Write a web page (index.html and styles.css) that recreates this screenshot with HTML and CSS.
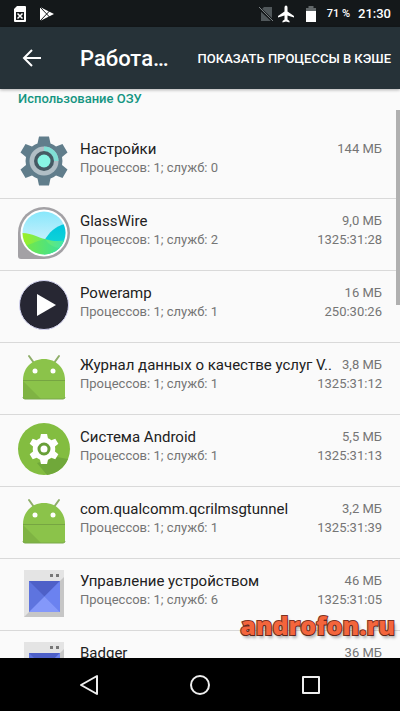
FILE: index.html
```html
<!DOCTYPE html>
<html lang="ru">
<head>
<meta charset="utf-8">
<meta name="viewport" content="width=device-width, initial-scale=1">
<title>Работающие приложения</title>
<link rel="stylesheet" href="styles.css">
</head>
<body>
<svg class="defs" aria-hidden="true">
  <defs>
    <path id="gear" d="M-5-24.500H5L6.500-17.500A18 18 0 0 1 12-14.500L18.500-17L23.500-8.500L18-4A18 18 0 0 1 18 4L23.500 8.500L18.500 17L12 14.500A18 18 0 0 1 6.500 17.500L5 24.500H-5L-6.500 17.500A18 18 0 0 1-12 14.500L-18.500 17L-23.500 8.500L-18 4A18 18 0 0 1-18-4L-23.500-8.500L-18.500-17L-12-14.500A18 18 0 0 1-6.500-17.500Z"/>
    <symbol id="robot" viewBox="0 0 52 52">
      <path d="M11 5L16 12M41 5L36 12" stroke="#8fae6a" stroke-width="2" stroke-linecap="round"/>
      <path d="M5 29C5 17 14 8 26 8S47 17 47 29Z" fill="#8bc34a"/>
      <path d="M5 30H47V46Q47 48 45 48H7Q5 48 5 46Z" fill="#8bc34a"/>
      <path d="M5 30L23 48H7Q5 48 5 46Z" fill="#7fb343"/>
      <path d="M5 29.500H47" stroke="#76a542"/>
      <path d="M5 46Q5 48 7 48H45Q47 48 47 46" fill="none" stroke="#78a848"/>
      <circle cx="17" cy="20" r="2.500" fill="#fff"/><circle cx="35" cy="20" r="2.500" fill="#fff"/>
    </symbol>
    <symbol id="window" viewBox="0 0 52 52">
      <path d="M6 3H46V50H6Z" fill="#e4e4e4"/>
      <path d="M6 50L11 45H42V14L46 10V50Z" fill="#c6c6c6"/>
      <path d="M32 7H35V10H32ZM38 7H41V10H38Z" fill="#777"/>
      <path d="M11 14H42V45H11Z" fill="#5e74df"/>
      <path d="M11 14H42L26.500 29.500Z" fill="#4e60c8"/>
      <path d="M42 14V45L26.500 29.500Z" fill="#6b82f0"/>
      <path d="M11 45H42L26.500 29.500Z" fill="#8498fa"/>
    </symbol>
  </defs>
</svg>

<div class="status">
  <svg class="status-icon" viewBox="0 0 16 18" aria-hidden="true"><path d="M5 1H13Q14 1 14 2V16Q14 17 13 17H3Q2 17 2 16V4Z" fill="#fff"/><path d="M4 7H12V15H4Z" fill="#14181a"/><path d="M5.500 8.500L10.500 13.500M10.500 8.500L5.500 13.500" stroke="#fff" stroke-width="1.500"/></svg>
  <svg class="status-icon play" viewBox="0 0 16 18" aria-hidden="true"><path d="M1 2L15 9L1 16Z" fill="#fff"/><path d="M1 2L10.500 12M1 16L10.500 6" stroke="#14181a" stroke-width="1"/></svg>
  <span class="spacer"></span>
  <svg class="status-icon" viewBox="0 0 16 18" aria-hidden="true"><path d="M6 2H14V16H3V5Z" fill="#50575a"/><path d="M1 3L15 16" stroke="#14181a" stroke-width="3"/><path d="M1 2L15 16" stroke="#7a8082" stroke-width="1"/></svg>
  <svg class="status-icon wide" viewBox="0 0 18 18" aria-hidden="true"><path d="M9 0.500Q10.500 0.500 10.500 2.500V6.500L17 11V12.500L10.500 10.500V14.500L12.500 16V17.500L9 16.500L5.500 17.500V16L7.500 14.500V10.500L1 12.500V11L7.500 6.500V2.500Q7.500 0.500 9 0.500Z" fill="#fff"/></svg>
  <svg class="status-icon battery" viewBox="0 0 16 18" aria-hidden="true"><path d="M5.500 1H10.500V3H13V7H3V3H5.500Z" fill="#62686a"/><path d="M3 6H13V17H3Z" fill="#fff"/></svg>
  <span class="percent">71 %</span>
  <span class="clock">21:30</span>
</div>

<header class="bar">
  <button class="back" aria-label="Назад"><svg viewBox="0 0 24 24"><path d="M21 12H4M12 4L4 12L12 20" fill="none" stroke="#fff" stroke-width="2"/></svg></button>
  <h1>Работа…</h1>
  <button class="action">ПОКАЗАТЬ ПРОЦЕССЫ В КЭШЕ</button>
</header>

<main>
  <h2>Использование ОЗУ</h2>
  <ul>
    <li><a href="#">
      <svg class="icon" viewBox="0 0 52 52" aria-hidden="true"><g transform="translate(26 26)"><use href="#gear" fill="#607d8b"/><circle r="14.500" fill="#b0bec5"/><path d="M0-14.500A14.500 14.500 0 0 1 14.500 0H0Z" fill="#80dfd5"/><circle r="10" fill="#455a64"/><circle r="6.500" fill="#88f5e5"/></g></svg>
      <span class="text"><span class="name">Настройки</span><span class="sub">Процессов: 1; служб: 0</span></span>
      <span class="usage"><span>144 МБ</span></span>
    </a></li>
    <li><a href="#">
      <svg class="icon" viewBox="0 0 52 52" aria-hidden="true"><defs><linearGradient id="sky" x2="0" y2="1"><stop stop-color="#7ee6fb"/><stop offset=".6" stop-color="#c2effc"/></linearGradient><linearGradient id="hill"><stop stop-color="#a6f016"/><stop offset="1" stop-color="#3be4b4"/></linearGradient><linearGradient id="wave" x2="0" y2="1"><stop stop-color="#00c4df"/><stop offset="1" stop-color="#1be0cf"/></linearGradient><clipPath id="disc"><circle cx="26" cy="26" r="21.500"/></clipPath></defs><path d="M0 26A26 26 0 1 1 26 52H3Q0 52 0 49Z" fill="#a3a1a5"/><circle cx="26" cy="26" r="23.500" fill="#fff"/><g clip-path="url(#disc)"><path d="M0 0H52V52H0Z" fill="url(#sky)"/><path d="M26 34C32 24 38 18 52 16V52H26Z" fill="url(#wave)"/><path d="M0 26C14 25 20 31 27 32C33 34 40 35 50 33V52H0Z" fill="url(#hill)"/><path d="M0 42C12 37 20 34 27 32C32 39 36 41 48 42V52H0Z" fill="#22d88b" opacity=".3"/></g></svg>
      <span class="text"><span class="name">GlassWire</span><span class="sub">Процессов: 1; служб: 2</span></span>
      <span class="usage"><span>9,0 МБ</span><span>1325:31:28</span></span>
    </a></li>
    <li><a href="#">
      <svg class="icon" viewBox="0 0 52 52" aria-hidden="true"><circle cx="26" cy="26" r="24.500" fill="#272733" stroke="#d5d5f2"/><path d="M19 15L38 26L19 37Z" fill="#fff"/></svg>
      <span class="text"><span class="name">Poweramp</span><span class="sub">Процессов: 1; служб: 1</span></span>
      <span class="usage"><span>16 МБ</span><span>250:30:26</span></span>
    </a></li>
    <li><a href="#">
      <svg class="icon" aria-hidden="true"><use href="#robot"/></svg>
      <span class="text"><span class="name">Журнал данных о качестве услуг V..</span><span class="sub">Процессов: 1; служб: 1</span></span>
      <span class="usage"><span>3,8 МБ</span><span>1325:31:12</span></span>
    </a></li>
    <li><a href="#">
      <svg class="icon" viewBox="0 0 52 52" aria-hidden="true"><circle cx="26" cy="26" r="26" fill="#83bd40"/><path d="M39 34L50 36A26 26 0 0 1 29 52L19 40Z" fill="#70a83a"/><g transform="translate(26 26)"><use href="#gear" transform="scale(.61)" fill="#fff"/><circle r="5" fill="#fff" stroke="#689f38" stroke-width="3"/></g></svg>
      <span class="text"><span class="name">Система Android</span><span class="sub">Процессов: 1; служб: 1</span></span>
      <span class="usage"><span>5,5 МБ</span><span>1325:31:13</span></span>
    </a></li>
    <li><a href="#">
      <svg class="icon" aria-hidden="true"><use href="#robot"/></svg>
      <span class="text"><span class="name">com.qualcomm.qcrilmsgtunnel</span><span class="sub">Процессов: 1; служб: 1</span></span>
      <span class="usage"><span>3,2 МБ</span><span>1325:31:39</span></span>
    </a></li>
    <li><a href="#">
      <svg class="icon" aria-hidden="true"><use href="#window"/></svg>
      <span class="text"><span class="name">Управление устройством</span><span class="sub">Процессов: 1; служб: 6</span></span>
      <span class="usage"><span>46 МБ</span><span>1325:31:05</span></span>
    </a></li>
    <li><a href="#">
      <svg class="icon" aria-hidden="true"><use href="#window"/></svg>
      <span class="text"><span class="name">Badger</span></span>
      <span class="usage"><span>36 МБ</span></span>
    </a></li>
  </ul>
  <div class="scrollbar"></div>
  <div class="watermark">androfon.ru</div>
</main>

<nav>
  <button aria-label="Назад"><svg viewBox="0 0 24 24"><path d="M20 3V21L4 12Z" fill="none" stroke="#eee" stroke-width="2" stroke-linejoin="round"/></svg></button>
  <button aria-label="Домой"><svg viewBox="0 0 24 24"><circle cx="12" cy="12" r="9" fill="none" stroke="#eee" stroke-width="2"/></svg></button>
  <button aria-label="Обзор"><svg viewBox="0 0 24 24"><path d="M4 4H20V20H4Z" fill="none" stroke="#eee" stroke-width="2" stroke-linejoin="round"/></svg></button>
</nav>
</body>
</html>
```
FILE: styles.css
```css
* { box-sizing: border-box; }
body {
  margin: 0;
  height: 100vh;
  display: flex;
  flex-direction: column;
  overflow: hidden;
  background: #fafafa;
  font-family: Roboto, "Noto Sans", sans-serif;
}
button { border: 0; padding: 0; background: none; color: inherit; font: inherit; }
.defs { position: absolute; width: 0; height: 0; }

.status {
  flex: none;
  height: 27px;
  display: flex;
  align-items: center;
  padding: 0 9px 0 12px;
  background: #14181a;
  color: #fff;
  font-weight: 500;
}
.status-icon { width: 16px; height: 18px; }
.status-icon.play { margin-left: 11px; }
.status-icon.wide { width: 18px; margin-left: 3px; }
.status-icon.battery { margin-left: 8px; }
.spacer { flex: 1; }
.percent { margin-left: 8px; font-size: 11px; }
.clock { margin-left: 8px; font-size: 13px; }

.bar {
  flex: none;
  height: 62px;
  display: flex;
  align-items: center;
  padding: 0 9px 0 20px;
  background: #263238;
  color: #fff;
  z-index: 1;
  box-shadow: 0 1px 3px rgba(0, 0, 0, .3);
}
.back { width: 24px; height: 24px; }
.back svg { display: block; }
h1 { flex: 1; margin: 0 0 0 36px; font-size: 22px; font-weight: 500; white-space: nowrap; }
.action { font-size: 13px; font-weight: 500; white-space: nowrap; }

main { position: relative; flex: 1; min-height: 0; overflow: hidden; }
h2 {
  margin: 0;
  height: 38px;
  padding: 0 18px;
  color: #149581;
  font-size: 13px;
  line-height: 20px;
  font-weight: 500;
}
ul { margin: 0; padding: 0; list-style: none; }
li { border-bottom: 1px solid #d9d9d9; }
a {
  height: 71px;
  display: flex;
  padding: 8px 18px 0;
  gap: 10px;
  color: #757575;
  font-size: 13px;
  line-height: 18px;
  text-decoration: none;
}
.icon { flex: none; width: 52px; height: 52px; }
.text, .usage { display: flex; flex-direction: column; padding-top: 4px; white-space: nowrap; }
.text { flex: 1; min-width: 0; }
.usage { align-items: flex-end; }
.name { color: #212121; font-size: 15px; line-height: 20px; }
.usage span:first-child { line-height: 20px; }
.scrollbar { position: absolute; top: 21px; right: 0; width: 4px; height: 195px; background: #b0b0b0; }
.watermark {
  position: absolute;
  right: 5px;
  bottom: 16px;
  color: #f4653c;
  font: 800 25px/34px "Open Sans", sans-serif;
  -webkit-text-stroke: 2px #7c3324;
  paint-order: stroke fill;
  text-shadow: 2px 3px 3px rgba(0, 0, 0, .3);
}

nav {
  flex: none;
  height: 53px;
  display: flex;
  justify-content: center;
  align-items: center;
  background: #000;
}
nav button { width: 111px; height: 53px; }
nav svg { display: block; width: 24px; height: 24px; margin: auto; }
```
